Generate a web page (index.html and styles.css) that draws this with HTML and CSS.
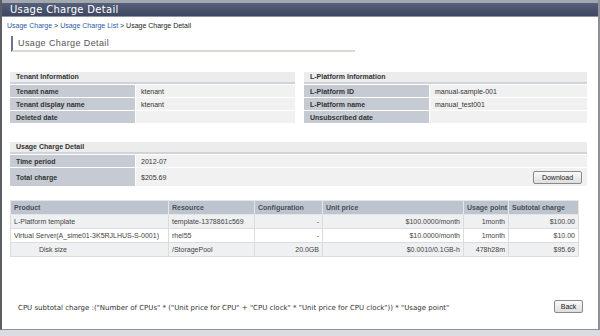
FILE: index.html
```html
<!DOCTYPE html>
<html lang="en">
<head>
    <meta charset="UTF-8">
    <title>Usage Charge Detail</title>
    <link rel="stylesheet" href="styles.css">
</head>
<body>
    <div class="window">
        <div class="title-bar">Usage Charge Detail</div>
        <div class="content">
            <div class="breadcrumb">
                <a href="#">Usage Charge</a> &gt; <a href="#">Usage Charge List</a> &gt; Usage Charge Detail
            </div>
            <div class="page-heading">Usage Charge Detail</div>

            <div class="info-row">
                <div class="section half">
                    <div class="section-title">Tenant Information</div>
                    <div class="kv"><span class="key">Tenant name</span><span class="val">ktenant</span></div>
                    <div class="kv"><span class="key">Tenant display name</span><span class="val">ktenant</span></div>
                    <div class="kv"><span class="key">Deleted date</span><span class="val"></span></div>
                </div>
                <div class="section half">
                    <div class="section-title">L-Platform Information</div>
                    <div class="kv"><span class="key">L-Platform ID</span><span class="val">manual-sample-001</span></div>
                    <div class="kv"><span class="key">L-Platform name</span><span class="val">manual_test001</span></div>
                    <div class="kv"><span class="key">Unsubscribed date</span><span class="val"></span></div>
                </div>
            </div>

            <div class="section full">
                <div class="section-title">Usage Charge Detail</div>
                <div class="kv"><span class="key">Time period</span><span class="val">2012-07</span></div>
                <div class="kv tall"><span class="key">Total charge</span><span class="val">$205.69<button class="btn download">Download</button></span></div>
            </div>

            <table class="charges">
                <thead>
                    <tr>
                        <th class="c-product">Product</th>
                        <th class="c-resource">Resource</th>
                        <th class="c-config">Configuration</th>
                        <th class="c-price">Unit price</th>
                        <th class="c-usage">Usage point</th>
                        <th class="c-sub">Subtotal charge</th>
                    </tr>
                </thead>
                <tbody>
                    <tr class="shade">
                        <td>L-Platform template</td>
                        <td>template-1378861c569</td>
                        <td class="num">-</td>
                        <td class="num">$100.0000/month</td>
                        <td class="num">1month</td>
                        <td class="num">$100.00</td>
                    </tr>
                    <tr>
                        <td>Virtual Server(A_sime01-3K5RJLHUS-S-0001)</td>
                        <td>rhel55</td>
                        <td class="num">-</td>
                        <td class="num">$10.0000/month</td>
                        <td class="num">1month</td>
                        <td class="num">$10.00</td>
                    </tr>
                    <tr class="shade">
                        <td class="indent">Disk size</td>
                        <td>/StoragePool</td>
                        <td class="num">20.0GB</td>
                        <td class="num">$0.0010/0.1GB-h</td>
                        <td class="num">478h28m</td>
                        <td class="num">$95.69</td>
                    </tr>
                </tbody>
            </table>

            <div class="footer">
                <span class="note">CPU subtotal charge :("Number of CPUs" * ("Unit price for CPU" + "CPU clock" * "Unit price for CPU clock")) * "Usage point"</span>
                <button class="btn back">Back</button>
            </div>
        </div>
    </div>
</body>
</html>
```

FILE: styles.css
```css
body {
    margin: 0;
    background-color: #d9dce0;
    font-family: "Liberation Sans", Arial, sans-serif;
    font-size: 8px;
    color: #333333;
}

.window {
    box-sizing: border-box;
    width: 600px;
    height: 330px;
    border-left: 2px solid #5c5f66;
    border-right: 2px solid #8d9096;
    border-bottom: 1px solid #8d9096;
    background-color: #ffffff;
}

.title-bar {
    height: 13px;
    border-top: 3px solid #a3a7ae;
    border-bottom: 1px solid #8e94a2;
    background: linear-gradient(#56607a, #3e4660);
    color: #ffffff;
    font-family: "DejaVu Sans", sans-serif;
    font-size: 10px;
    line-height: 13px;
    padding-left: 8px;
    letter-spacing: 0.3px;
}

.content {
    padding: 0 10px 0 5px;
}

.breadcrumb {
    font-size: 7px;
    margin-top: 5px;
    color: #222222;
    white-space: nowrap;
}

.breadcrumb a {
    color: #2b5aa6;
    text-decoration: none;
}

.page-heading {
    width: 337px;
    margin-top: 7px;
    margin-left: 4px;
    border-left: 2px solid #6a7590;
    border-bottom: 2px solid #d8d9d4;
    padding: 2px 0 2px 5px;
    font-size: 9px;
    color: #555555;
    letter-spacing: 0.4px;
}

.info-row {
    display: flex;
    gap: 9px;
    margin-top: 20px;
    margin-left: 3px;
}

.half {
    width: 285px;
}

.half + .half {
    width: 283px;
}

.full {
    width: 577px;
    margin-left: 3px;
    margin-top: 19px;
}

.section-title {
    height: 10px;
    line-height: 10px;
    padding-left: 6px;
    font-size: 7px;
    font-weight: bold;
    color: #333333;
    background-color: #ececec;
    border-bottom: 2px solid #d0d4da;
}

.kv {
    display: flex;
    height: 12px;
    border-top: 1px solid #ffffff;
}

.kv.tall {
    height: 18px;
}

.key {
    width: 119px;
    padding-left: 6px;
    background-color: #c6cbd3;
    font-size: 7px;
    font-weight: bold;
    color: #333333;
    display: flex;
    align-items: center;
}

.val {
    flex: 1;
    padding-left: 5px;
    padding-right: 5px;
    background-color: #f1f1f1;
    border-left: 1px solid #ffffff;
    font-size: 7px;
    color: #333333;
    display: flex;
    align-items: center;
    justify-content: space-between;
}

.btn {
    font-family: "Liberation Sans", Arial, sans-serif;
    font-size: 7px;
    color: #222222;
    background: linear-gradient(#fafafa, #dedede);
    border: 1px solid #8a8a8a;
    border-radius: 2px;
    height: 13px;
    padding: 0;
}

.download {
    width: 49px;
}

.back {
    width: 29px;
}

.charges {
    margin-top: 14px;
    margin-left: 3px;
    width: 568px;
    border-collapse: collapse;
    table-layout: fixed;
    font-size: 7px;
    color: #444444;
}

.charges th,
.charges td {
    box-sizing: border-box;
    padding: 0 3px;
    white-space: nowrap;
    overflow: hidden;
}

.charges th {
    background-color: #bdc4ce;
    color: #4a4f58;
    font-weight: bold;
    text-align: left;
    height: 14px;
    border: 1px solid #e3e6ea;
}

.charges td {
    height: 14px;
    border: 1px solid #dcdcdc;
    background-color: #ffffff;
}

.charges tr.shade td {
    background-color: #eef0f2;
}

.charges td.num {
    text-align: right;
}

.charges td.indent {
    padding-left: 28px;
}

.c-product { width: 158px; }
.c-resource { width: 86px; }
.c-config { width: 68px; }
.c-price { width: 141px; }
.c-usage { width: 45px; }
.c-sub { width: 70px; }

.footer {
    display: flex;
    justify-content: space-between;
    align-items: center;
    margin-top: 43px;
    padding-left: 11px;
    padding-right: 5px;
}

.note {
    font-family: "DejaVu Sans", sans-serif;
    font-size: 7px;
    color: #333333;
    white-space: nowrap;
    margin-top: 3px;
}
```
